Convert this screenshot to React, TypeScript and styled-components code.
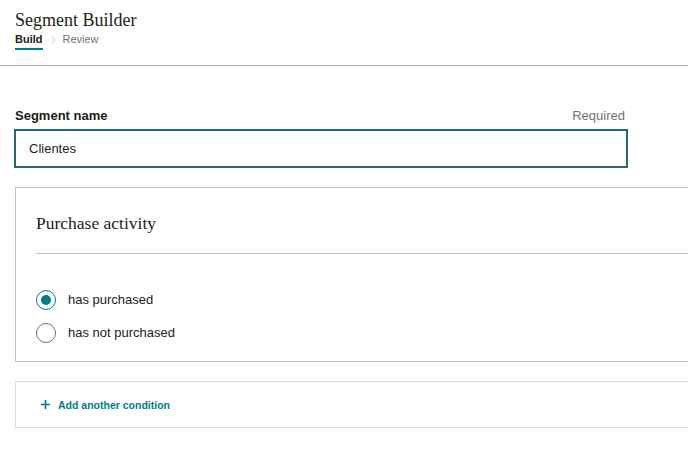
import { createGlobalStyle, styled } from "styled-components";
import { useState } from "react";

const GlobalStyle = createGlobalStyle`
  html, body {
    margin: 0;
    padding: 0;
    background: #ffffff;
    overflow: hidden;
  }
  * {
    box-sizing: border-box;
  }
`;

const options = ["has purchased", "has not purchased"];

const App = () => {
  const [selected, setSelected] = useState(0);
  const [name, setName] = useState("Clientes");

  return (
    <Page>
      <GlobalStyle />
      <Header>
        <PageTitle>Segment Builder</PageTitle>
        <Steps>
          <Step $active>Build</Step>
          <Chevron viewBox="0 0 6 10">
            <path d="M1 1l4 4-4 4" fill="none" stroke="#b5b5b5" strokeWidth="1" />
          </Chevron>
          <Step>Review</Step>
        </Steps>
      </Header>
      <Content>
        <Field>
          <LabelRow>
            <Label>Segment name</Label>
            <Hint>Required</Hint>
          </LabelRow>
          <Input value={name} onChange={(e) => setName(e.target.value)} />
        </Field>
        <Card>
          <CardTitle>Purchase activity</CardTitle>
          <RadioList>
            {options.map((option, i) => (
              <RadioRow key={option} onClick={() => setSelected(i)}>
                <Radio $checked={selected === i} />
                <RadioLabel>{option}</RadioLabel>
              </RadioRow>
            ))}
          </RadioList>
        </Card>
        <AddCard>
          <AddButton>
            <svg width="9" height="9" viewBox="0 0 9 9">
              <path d="M4.5 0v9M0 4.5h9" stroke="#007c89" strokeWidth="1.6" />
            </svg>
            Add another condition
          </AddButton>
        </AddCard>
      </Content>
    </Page>
  );
};

export default App;

const Page = styled.div`
  width: 688px;
  height: 469px;
  overflow: hidden;
  font-family: "Liberation Sans", Arial, sans-serif;
  color: #241c15;
`;

const Header = styled.div`
  padding: 9px 15px 0;
  height: 66px;
  border-bottom: 1px solid #b3b3b3;
`;

const PageTitle = styled.h1`
  margin: 0;
  font-family: "Liberation Serif", Georgia, serif;
  font-weight: 400;
  font-size: 18px;
  line-height: 22px;
  color: #241c15;
`;

const Steps = styled.div`
  display: flex;
  align-items: center;
  gap: 8px;
  margin-top: 1px;
`;

const Step = styled.span<{ $active?: boolean }>`
  font-size: 11px;
  line-height: 14px;
  padding-bottom: 2px;
  font-weight: ${(p) => (p.$active ? 700 : 400)};
  color: ${(p) => (p.$active ? "#241c15" : "#727272")};
  border-bottom: 2px solid ${(p) => (p.$active ? "#007c89" : "transparent")};
`;

const Chevron = styled.svg`
  width: 5px;
  height: 8px;
  margin: 0 -1px 2px 0;
`;

const Content = styled.div`
  padding: 42px 0 0 15px;
  display: flex;
  flex-direction: column;
`;

const Field = styled.div`
  width: 612px;
  display: flex;
  flex-direction: column;
  gap: 6px;
`;

const LabelRow = styled.div`
  display: flex;
  justify-content: space-between;
  align-items: center;
  padding-right: 2px;
`;

const Label = styled.label`
  font-size: 13px;
  font-weight: 700;
  line-height: 16px;
  color: #241c15;
`;

const Hint = styled.span`
  font-size: 13px;
  line-height: 16px;
  color: #727272;
`;

const Input = styled.input`
  height: 37px;
  width: 100%;
  margin-left: 0;
  padding: 0 13px;
  border: 1px solid #555555;
  box-shadow: 0 0 0 1px #007c89;
  outline: none;
  font-family: "Liberation Sans", Arial, sans-serif;
  font-size: 13px;
  color: #241c15;
  background: #ffffff;
`;

const Card = styled.div`
  margin-top: 20px;
  width: 720px;
  height: 175px;
  border: 1px solid #c4c4c4;
  padding: 0 0 0 20px;
`;

const CardTitle = styled.h2`
  margin: 0;
  padding: 25px 0 19px;
  border-bottom: 1px solid #c4c4c4;
  font-family: "Liberation Serif", Georgia, serif;
  font-weight: 400;
  font-size: 17.5px;
  line-height: 21px;
  color: #241c15;
`;

const RadioList = styled.div`
  display: flex;
  flex-direction: column;
  gap: 13px;
  padding-top: 36px;
`;

const RadioRow = styled.div`
  display: flex;
  align-items: center;
  gap: 12px;
  cursor: pointer;
`;

const Radio = styled.span<{ $checked?: boolean }>`
  width: 20px;
  height: 20px;
  border-radius: 50%;
  border: ${(p) => (p.$checked ? "1.5px solid #007c89" : "1px solid #6e6e6e")};
  display: flex;
  align-items: center;
  justify-content: center;
  &::after {
    content: "";
    width: 10px;
    height: 10px;
    border-radius: 50%;
    background: ${(p) => (p.$checked ? "#007c89" : "transparent")};
  }
`;

const RadioLabel = styled.span`
  font-size: 13px;
  line-height: 16px;
  color: #241c15;
`;

const AddCard = styled.div`
  margin-top: 19px;
  width: 720px;
  height: 47px;
  border: 1px solid #dcdcdc;
  padding: 0 0 0 25px;
  display: flex;
  align-items: center;
`;

const AddButton = styled.button`
  display: flex;
  align-items: center;
  gap: 8px;
  border: none;
  background: none;
  padding: 0;
  cursor: pointer;
  font-family: "Liberation Sans", Arial, sans-serif;
  font-size: 10.5px;
  font-weight: 700;
  color: #007c89;
`;
